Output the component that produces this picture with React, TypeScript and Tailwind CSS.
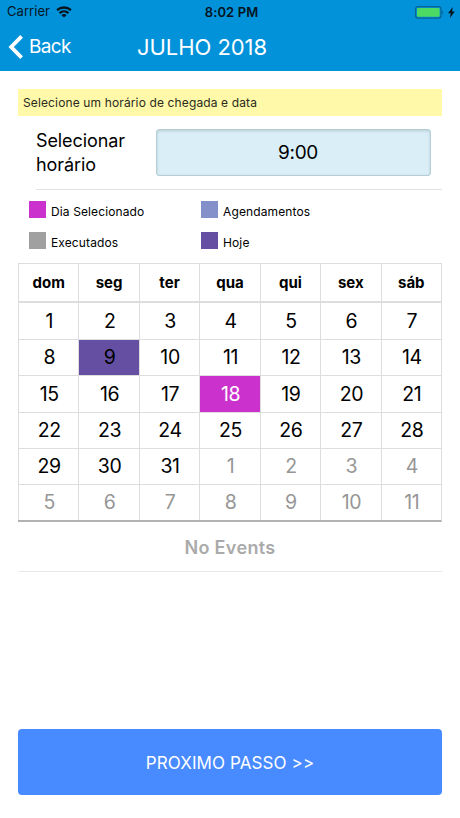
import React, { useState } from 'react';

const weekDays = ['dom', 'seg', 'ter', 'qua', 'qui', 'sex', 'sáb'];

const weeks = [
  [1, 2, 3, 4, 5, 6, 7],
  [8, 9, 10, 11, 12, 13, 14],
  [15, 16, 17, 18, 19, 20, 21],
  [22, 23, 24, 25, 26, 27, 28],
  [29, 30, 31, 1, 2, 3, 4],
  [5, 6, 7, 8, 9, 10, 11]
];

const legend = [
  { label: 'Dia Selecionado', color: 'bg-[#cb32cd]' },
  { label: 'Agendamentos', color: 'bg-[#8490ca]' },
  { label: 'Executados', color: 'bg-[#a0a0a0]' },
  { label: 'Hoje', color: 'bg-[#644fa3]' }
];

const today = 9;

const StatusBar: React.FC = () => (
  <div className="grid h-6 grid-cols-3 items-center pl-[7px] pr-[5px] text-[13px] text-[#06141e]">
    <div className="flex items-center gap-[6px]">
      <span className="tracking-[0.05px]">Carrier</span>
      <svg width="16" height="12" viewBox="0 0 16 12" fill="none" stroke="currentColor" strokeWidth="2.3">
        <path d="M1 4.2C5 .6 11 .6 15 4.2" />
        <path d="M3.5 7.1c2.6-2.4 6.4-2.4 9 0" />
        <path d="M8 11.5 5.4 9c1.5-1.3 3.7-1.3 5.2 0z" fill="currentColor" stroke="none" />
      </svg>
    </div>
    <span className="pt-px pl-px text-center font-semibold tracking-[0.1px]">8:02 PM</span>
    <div className="flex items-center justify-end gap-1">
      <svg width="29" height="13" viewBox="0 0 29 13">
        <rect x="0.6" y="0.6" width="25.4" height="11.6" rx="2.4" fill="none" stroke="#086494" strokeWidth="1.2" />
        <rect x="2" y="2" width="22.6" height="8.8" rx="1" fill="#4cd964" />
        <path d="M27.2 4.5c1.4.7 1.4 3.3 0 4z" fill="#086494" />
      </svg>
      <svg width="7" height="11" viewBox="0 0 7 11" fill="currentColor">
        <path d="M4.8 0 0 6.2h2.7L1.9 11 6.8 4.5H4.1z" />
      </svg>
    </div>
  </div>
);

const Header: React.FC = () => (
  <header className="h-[71px] bg-[#0292da]">
    <StatusBar />
    <div className="grid h-[47px] grid-cols-[1fr_auto_1fr] items-center text-white">
      <button className="flex items-center gap-[6px] pb-[2px] pl-[8px]">
        <svg width="15" height="24" viewBox="0 0 15 24" fill="none" stroke="currentColor" strokeWidth="3.8">
          <path d="M13.6 1.4 3.2 12l10.4 10.6" />
        </svg>
        <span className="pt-px text-[19px] leading-6 tracking-[-0.65px]">Back</span>
      </button>
      <h1 className="ml-[-56px] text-[22px] tracking-[-0.05px]">JULHO 2018</h1>
    </div>
  </header>
);

const App: React.FC = () => {
  const [selected, setSelected] = useState(18);

  const dayClass = (day: number, outside: boolean) => {
    if (outside) return 'text-[#969696]';
    if (day === selected) return 'bg-[#cb32cd] text-white';
    if (day === today) return 'bg-[#644fa3] text-black';
    return 'text-black';
  };

  return (
    <div className="flex h-[818px] w-[460px] flex-col bg-white font-['Inter',sans-serif] text-black">
      <Header />

      <main className="flex flex-1 flex-col px-[18px] pt-[18px] pb-[23px]">
        <div className="h-[27px] bg-[#fff9a9] pl-[5px] text-[12px] leading-[27px] tracking-[0.13px] text-[#2b2a1c]">
          Selecione um horário de chegada e data
        </div>

        <div className="ml-[18px] flex h-[74px] border-b border-[#e2e2e2] pt-[13px]">
          <label className="w-[119px] text-[18px] leading-[24px] tracking-[-0.1px]">
            Selecionar horário
          </label>
          <button className="ml-px h-[47px] w-[275px] rounded-[3px] border border-[#b5ced8] bg-[#d9eef7] pt-px pl-[9px] text-center text-[19px] tracking-[-0.3px] shadow-[inset_0_1px_3px_rgba(0,0,0,0.15)]">
            9:00
          </button>
        </div>

        <div className="grid h-[73px] grid-cols-[172px_1fr] content-start gap-y-[14px] pt-[10.5px] pl-[11px]">
          {legend.map((item) => (
            <div key={item.label} className="flex h-[17px] gap-[5px]">
              <span className={`size-[17px] ${item.color}`} />
              <span className="pt-[2px] text-[12px] leading-[17px] tracking-[0.12px]">{item.label}</span>
            </div>
          ))}
        </div>

        <div className="h-[259px] border-t border-r border-b-2 border-t-[#ddd] border-r-[#ddd] border-b-[#b2b2b2]">
          <div className="grid h-[39px] grid-cols-7 border-b-2 border-[#ddd]">
            {weekDays.map((name) => (
              <div key={name} className="flex items-center justify-center border-l border-[#ddd] pt-px text-[15px] font-bold">
                {name}
              </div>
            ))}
          </div>
          <div className="grid h-[217px] grid-cols-7 grid-rows-[37px_36px_37px_36px_36px_35px]">
            {weeks.map((week, row) =>
              week.map((day, col) => {
                const outside = row > 3 && day < 29;
                return (
                  <div
                    key={`${row}-${col}`}
                    onClick={() => !outside && setSelected(day)}
                    className={`flex items-center justify-center border-l border-[#ddd] pt-px pl-px text-[19.5px] tracking-[-0.4px] ${row < 5 ? 'border-b' : ''} ${dayClass(day, outside)}`}
                  >
                    {day}
                  </div>
                );
              })
            )}
          </div>
        </div>

        <div className="flex h-[50px] items-center justify-center border-b border-[#e8e8e8] pt-[2px] text-[18px] font-semibold tracking-[0.35px] text-[#aaa]">
          No Events
        </div>

        <button className="mt-auto h-[66px] rounded-[4px] bg-[#488aff] pt-[3px] text-[17px] tracking-[0.1px] text-white">
          PROXIMO PASSO &gt;&gt;
        </button>
      </main>
    </div>
  );
};

export default App;
